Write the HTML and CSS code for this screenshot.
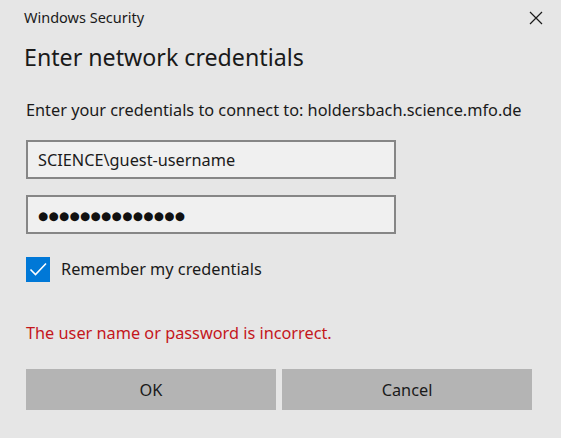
FILE: index.html
```html
<!DOCTYPE html>
<html>
<head>
<meta charset="utf-8">
<link rel="stylesheet" href="styles.css">
</head>
<body>
<div class="dialog">
  <div class="titlebar">
    <span class="app">Windows Security</span>
    <span class="close"><svg width="14" height="14" viewBox="0 0 14 14"><path d="M1 1L13 13M13 1L1 13" stroke="#1a1a1a" stroke-width="1.2" fill="none"/></svg></span>
  </div>
  <h1 class="heading">Enter network credentials</h1>
  <p class="prompt">Enter your credentials to connect to: holdersbach.science.mfo.de</p>
  <div class="field">SCIENCE\guest-username</div>
  <div class="field pw">●●●●●●●●●●●●●●</div>
  <div class="check">
    <span class="box"><svg width="24" height="24" viewBox="0 0 24 24"><path d="M4.5 12.5L9.5 17.5L20 6.5" stroke="#fff" stroke-width="1.6" fill="none"/></svg></span>
    <span class="label">Remember my credentials</span>
  </div>
  <p class="error">The user name or password is incorrect.</p>
  <div class="buttons">
    <div class="btn">OK</div>
    <div class="btn">Cancel</div>
  </div>
</div>
</body>
</html>
```
FILE: styles.css
```css
html, body {
  margin: 0;
  padding: 0;
  background: #e6e6e6;
}
body {
  font-family: "Noto Sans", "Open Sans", sans-serif;
  color: #1a1a1a;
}
.dialog {
  width: 561px;
  height: 438px;
  box-sizing: border-box;
  padding: 0 28px 0 26px;
}
.titlebar {
  height: 34px;
  display: flex;
  align-items: center;
  justify-content: space-between;
}
.app {
  font-size: 14.5px;
  margin-left: -2px;
}
.close {
  display: flex;
  margin-right: -10px;
  margin-top: 2px;
}
.heading {
  font-weight: normal;
  font-size: 23.2px;
  margin: 7px 0 0 -2px;
  height: 32px;
  line-height: 32px;
}
.prompt {
  font-size: 16.3px;
  margin: 26px 0 0 0;
  line-height: 22px;
  height: 22px;
}
.field {
  width: 370px;
  height: 39px;
  box-sizing: border-box;
  border: 2px solid #868686;
  background: #f0f0f0;
  margin-top: 19px;
  padding-left: 10px;
  display: flex;
  align-items: center;
  font-size: 16.3px;
}
.field.pw {
  margin-top: 16px;
  font-family: "DejaVu Sans", sans-serif;
  font-size: 11.6px;
  letter-spacing: 0.4px;
  padding-top: 2px;
  color: #111;
}
.check {
  display: flex;
  align-items: center;
  margin-top: 22px;
  height: 26px;
}
.box {
  width: 24px;
  height: 25px;
  background: #0078d7;
  display: flex;
  align-items: center;
  justify-content: center;
}
.label {
  font-size: 16.3px;
  margin-left: 11px;
}
.error {
  color: #c4161c;
  font-size: 16.3px;
  margin: 40px 0 0 0;
  line-height: 22px;
}
.buttons {
  display: flex;
  gap: 6px;
  margin-top: 25px;
}
.btn {
  width: 250px;
  height: 41px;
  background: #b4b4b4;
  display: flex;
  align-items: center;
  justify-content: center;
  font-size: 16.3px;
}
```
